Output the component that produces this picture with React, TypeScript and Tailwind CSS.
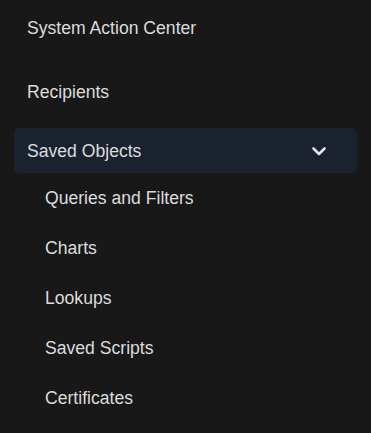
export default function App() {
  const subItems = ["Queries and Filters", "Charts", "Lookups", "Saved Scripts", "Certificates"];

  return (
    <div
      className="w-[371px] h-[433px] bg-[#181818] text-[#dcdcdc] overflow-hidden px-[14px]"
      style={{ fontFamily: '"Liberation Sans", Arial, sans-serif' }}
    >
      <nav className="flex flex-col text-[17.6px]">
        <div className="mt-[6px] h-[45px] flex items-center px-[13px]">System Action Center</div>
        <div className="mt-[19px] h-[45px] flex items-center px-[13px]">Recipients</div>
        <div className="mt-[13px] h-[45px] flex items-center justify-between pl-[13px] pr-[30px] bg-[#19222e] rounded-[5px]">
          <span className="pt-px">Saved Objects</span>
          <svg width="16" height="12" viewBox="0 0 16 12" fill="none" stroke="#e4e4e4" strokeWidth="2.6" strokeLinecap="round" strokeLinejoin="round">
            <path d="M2.5 3.5 8 9 13.5 3.5" />
          </svg>
        </div>
        {subItems.map((s) => (
          <div key={s} className="h-[50px] flex items-center pl-[31px]">
            {s}
          </div>
        ))}
      </nav>
    </div>
  );
}
